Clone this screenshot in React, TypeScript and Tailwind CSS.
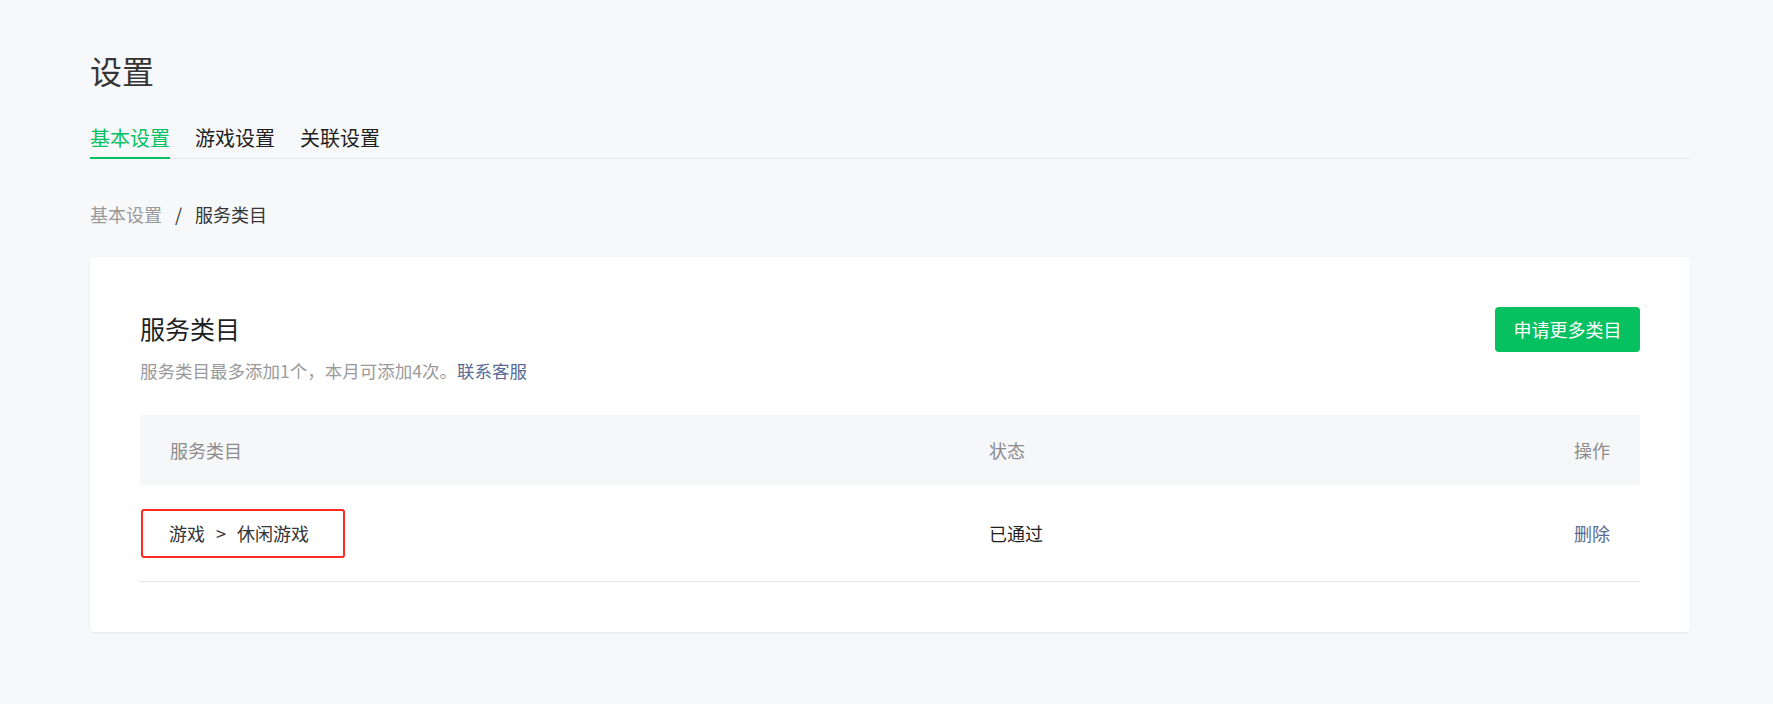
import { useState } from "react"

type Category = {
    path: string[]
    status: string
}

const tabs = ["基本设置", "游戏设置", "关联设置"]

const categories: Category[] = [{ path: ["游戏", "休闲游戏"], status: "已通过" }]

function Tabs() {
    const [active, setActive] = useState(0)

    return (
        <div className="mt-[30px] flex border-b border-[#e4e6ea]">
            {tabs.map((tab, i) => (
                <button
                    key={tab}
                    onClick={() => setActive(i)}
                    className={`-mb-px mr-[25px] border-b-2 pb-[5px] text-[20px] leading-[28px] ${
                        active === i ? "border-[#07c160] text-[#07c160]" : "border-transparent text-[#1f1f1f]"
                    }`}
                >
                    {tab}
                </button>
            ))}
        </div>
    )
}

function CategoryTable() {
    return (
        <div className="mt-[32px]">
            <div className="flex h-[70px] items-center bg-[#f6f7f9] text-[18px] text-[#8c8c8c]">
                <div className="w-[849px] pl-[30px]">服务类目</div>
                <div className="flex-1">状态</div>
                <div className="pr-[30px] text-right">操作</div>
            </div>

            {categories.map((c) => (
                <div
                    key={c.path.join("-")}
                    className="flex h-[97px] items-center border-b border-[#e6e6e6] text-[18px]"
                >
                    <div className="w-[849px] pl-px">
                        {/* 红框标注 */}
                        <div className="flex h-[49px] w-[204px] items-center rounded-[3px] border-2 border-[#ff2a22] pl-[26px] text-[#353535]">
                            <span>{c.path[0]}</span>
                            <span className="mx-[11px]">&gt;</span>
                            <span>{c.path[1]}</span>
                        </div>
                    </div>
                    <div className="flex-1 text-[#1f1f1f]">{c.status}</div>
                    <button className="pr-[30px] text-right text-[#576b95]">删除</button>
                </div>
            ))}
        </div>
    )
}

export default function App() {
    return (
        <div className="min-h-screen bg-[#f7f8fa] pl-[90px] pt-[46px] font-['Noto_Sans_CJK_SC',sans-serif]">
            <div className="w-[1600px]">
                <h1 className="text-[32px] leading-[48px] text-[#353535]">设置</h1>

                <Tabs />

                <div className="mt-[43px] flex items-center text-[18px] leading-[24px]">
                    <span className="text-[#9a9a9a]">基本设置</span>
                    <span className="mx-[13px] text-[#353535]">/</span>
                    <span className="text-[#353535]">服务类目</span>
                </div>

                <div className="mt-[31px] rounded-[4px] bg-white p-[50px] shadow-[0_1px_2px_rgba(0,0,0,0.08)]">
                    <div className="flex items-start justify-between">
                        <div>
                            <h2 className="text-[25px] leading-[42px] text-[#1f1f1f]">服务类目</h2>
                            <p className="mt-[10px] text-[17.5px] leading-[24px] text-[#9a9a9a]">
                                服务类目最多添加1个，本月可添加4次。
                                <a href="#" className="text-[#576b95]">
                                    联系客服
                                </a>
                            </p>
                        </div>
                        <button className="flex h-[45px] w-[145px] items-center justify-center rounded-[4px] bg-[#07c160] text-[18px] text-white">
                            申请更多类目
                        </button>
                    </div>

                    <CategoryTable />
                </div>
            </div>
        </div>
    )
}
